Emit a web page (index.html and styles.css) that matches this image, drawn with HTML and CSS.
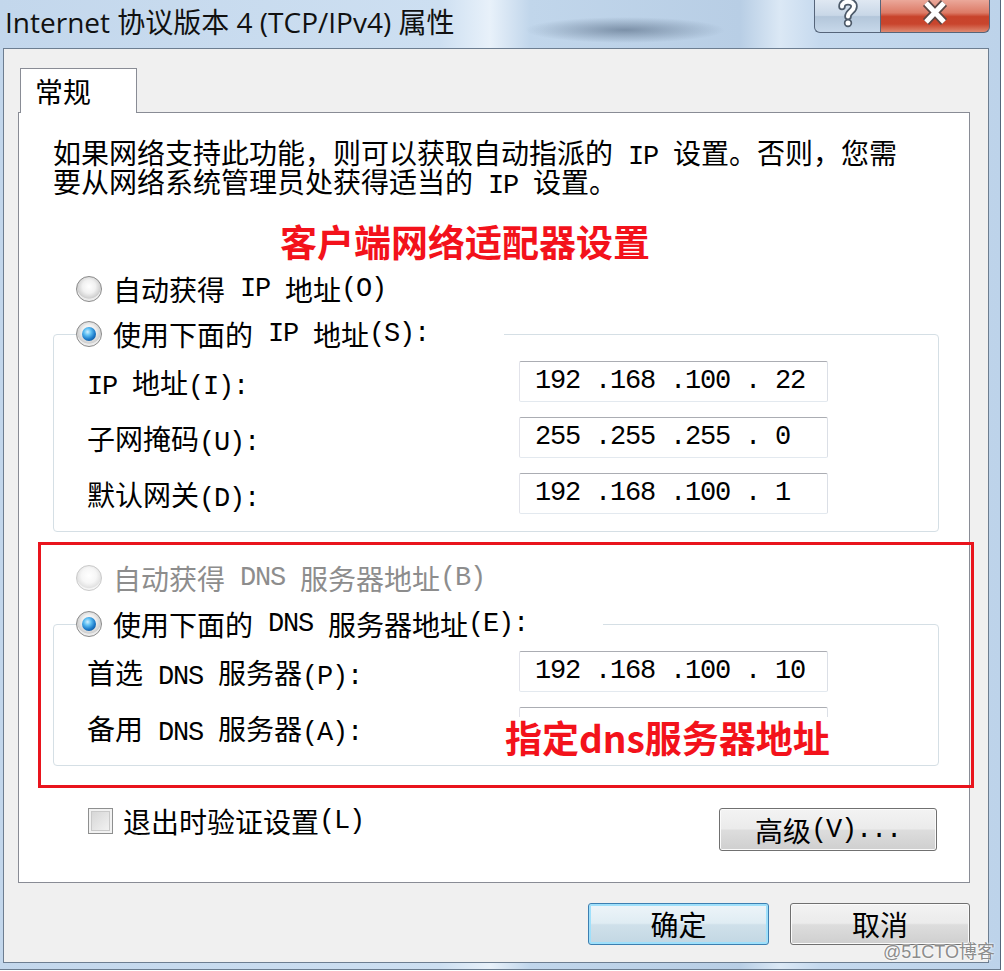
FILE: index.html
```html
<!DOCTYPE html>
<html lang="zh-CN">
<head>
    <meta charset="UTF-8" />
    <title>Internet 协议版本 4 (TCP/IPv4) 属性</title>
    <link rel="stylesheet" href="styles.css">
</head>
<body>
    <div class="window">
        <div class="titlebar">
            <div class="title">Internet 协议版本 4 (TCP/IPv4) 属性</div>
            <div class="caption">
                <div class="cap-btn help">
                    <svg width="22" height="30" viewBox="0 0 22 30">
                        <path d="M5 8.5 C5 2 17 2 17 8.5 C17 13 11 13.5 11 18.5" fill="none" stroke="#4d5a69" stroke-width="7.5" stroke-linecap="round"/>
                        <circle cx="11" cy="25" r="4.2" fill="#4d5a69"/>
                        <path d="M5 8.5 C5 2 17 2 17 8.5 C17 13 11 13.5 11 18.5" fill="none" stroke="#fff" stroke-width="4" stroke-linecap="round"/>
                        <circle cx="11" cy="25" r="2.5" fill="#fff"/>
                    </svg>
                </div>
                <div class="cap-btn close">
                    <svg width="30" height="26" viewBox="0 0 30 26">
                        <path d="M6 3 L24 22 M24 3 L6 22" stroke="#5b4644" stroke-width="8.5"/>
                        <path d="M6 3 L24 22 M24 3 L6 22" stroke="#fff" stroke-width="5"/>
                    </svg>
                </div>
            </div>
        </div>

        <div class="client">
            <div class="tabs"><div class="tab">常规</div></div>

            <div class="panel">
                <p class="desc">如果网络支持此功能，则可以获取自动指派的<span class="en"> IP </span>设置。否则，您需<br>要从网络系统管理员处获得适当的<span class="en"> IP </span>设置。</p>

                <div class="note">客户端网络适配器设置</div>

                <div class="choice"><span class="radio"></span>自动获得<span class="en"> IP </span>地址<span class="en">(O)</span></div>

                <fieldset class="group">
                    <legend><span class="choice"><span class="radio on"></span>使用下面的<span class="en"> IP </span>地址<span class="en">(S):</span></span></legend>
                    <div class="field">
                        <label><span class="en">IP </span>地址<span class="en">(I):</span></label>
                        <div class="ip">192 .168 .100 . 22</div>
                    </div>
                    <div class="field">
                        <label>子网掩码<span class="en">(U):</span></label>
                        <div class="ip">255 .255 .255 . 0</div>
                    </div>
                    <div class="field">
                        <label>默认网关<span class="en">(D):</span></label>
                        <div class="ip">192 .168 .100 . 1</div>
                    </div>
                </fieldset>

                <div class="choice off"><span class="radio"></span>自动获得<span class="en"> DNS </span>服务器地址<span class="en">(B)</span></div>

                <fieldset class="group dns">
                    <legend><span class="choice"><span class="radio on"></span>使用下面的<span class="en"> DNS </span>服务器地址<span class="en">(E):</span></span></legend>
                    <div class="field">
                        <label>首选<span class="en"> DNS </span>服务器<span class="en">(P):</span></label>
                        <div class="ip">192 .168 .100 . 10</div>
                    </div>
                    <div class="field">
                        <label>备用<span class="en"> DNS </span>服务器<span class="en">(A):</span></label>
                        <div class="ip"></div>
                    </div>
                </fieldset>

                <div class="options">
                    <div class="choice"><span class="check"></span>退出时验证设置<span class="en">(L)</span></div>
                    <div class="btn advanced">高级<span class="en">(V)...</span></div>
                </div>

                <!-- annotations drawn over the screenshot -->
                <div class="mark"></div>
                <div class="mark-text">指定dns服务器地址</div>
            </div>

            <div class="actions">
                <div class="btn default">确定</div>
                <div class="btn">取消</div>
            </div>
        </div>

        <div class="watermark">@51CTO博客</div>
    </div>
</body>
</html>
```

FILE: styles.css
```css
body {
    margin: 0;
    background: #fff;
    font-family: "Noto Sans CJK SC", sans-serif;
    color: #000;
}
.window {
    position: relative;
    width: 1001px;
    height: 970px;
    box-sizing: border-box;
    padding: 0 11px 6px 3px;
    border-right: 1px solid #55667a;
    border-bottom: 1px solid #6b7c8f;
    display: flex;
    flex-direction: column;
    background:
        radial-gradient(ellipse 100px 13px at 625px 30px, rgba(60, 80, 105, 0.5), rgba(60, 80, 105, 0)),
        linear-gradient(90deg, #c3d7ec 0, #cddff1 44%, #e8f1fa 49%, #c1d6eb 53%, #b8cee5 74%, #dbe8f5 78%, #c5d9ee 82%, #bdd3ea 100%);
}
.titlebar {
    height: 48px;
    display: flex;
    align-items: flex-start;
}
.title {
    font-family: "Open Sans", "Noto Sans CJK SC", sans-serif;
    font-size: 28px;
    line-height: 44px;
    padding-left: 2px;
    color: #111;
    white-space: nowrap;
}
.caption {
    margin-left: auto;
    margin-right: -1px;
    display: flex;
}
.cap-btn {
    height: 33px;
    box-sizing: border-box;
    border: 1px solid #56657a;
    border-top: none;
    display: flex;
    justify-content: center;
    align-items: flex-start;
    overflow: hidden;
}
.help {
    width: 66px;
    border-right: none;
    border-radius: 0 0 0 6px;
    background: linear-gradient(#dfe8f2, #c8d7e7 48%, #b3c6da 52%, #c7d8ea);
}
.help svg {
    margin-top: -2px;
}
.close {
    width: 110px;
    border-radius: 0 0 6px 0;
    background: linear-gradient(#eba89a, #dc7a66 40%, #c8432b 52%, #c9452d 75%, #de8a72);
}

.client {
    flex: 1;
    background: #f0f0f0;
    border: 1px solid #6d7e91;
    padding: 19px 18px 0 14px;
    position: relative;
}
.tabs {
    height: 44px;
}
.tab {
    position: relative;
    z-index: 1;
    width: 117px;
    height: 45px;
    box-sizing: border-box;
    margin-left: 2px;
    padding-left: 14px;
    background: #fff;
    border: 1px solid #898c95;
    border-bottom: none;
    font-size: 28px;
    line-height: 44px;
}
.panel {
    position: relative;
    height: 771px;
    box-sizing: border-box;
    background: #fff;
    border: 1px solid #898c95;
    font-size: 28px;
}
.en {
    font-family: "Liberation Mono", monospace;
    font-size: 27px;
    letter-spacing: -1.2px;
    line-height: 0;
    white-space: pre;
}
.desc {
    margin: 25px 0 0 34px;
    line-height: 29px;
    white-space: nowrap;
}
.note {
    margin: 23px 0 0 261px;
    font-size: 37px;
    font-weight: bold;
    line-height: 44px;
    color: #f3121b;
}
.choice {
    display: flex;
    align-items: center;
    height: 30px;
    line-height: 30px;
    white-space: nowrap;
}
.panel > .choice {
    margin: 11px 0 0 57px;
}
.choice.off {
    color: #8d8d8d;
    margin-top: 31px;
}
.radio {
    position: relative;
    width: 26px;
    height: 26px;
    box-sizing: border-box;
    margin-right: 11px;
    border-radius: 50%;
    border: 1px solid #8a8a8a;
    background: radial-gradient(circle at 50% 40%, #fff 0, #f1f1f1 35%, #cfcfcf 62%, #eaeaea 66%, #f7f7f7 100%);
    flex: none;
}
.radio.on::after {
    content: "";
    position: absolute;
    left: 5px;
    top: 5px;
    width: 14px;
    height: 14px;
    border-radius: 50%;
    background: radial-gradient(circle at 40% 35%, #d2f0ff 0, #5fc0f3 28%, #1c79c8 60%, #0b3d72 100%);
}
.off .radio {
    border-color: #c9c9c9;
    background: radial-gradient(circle at 50% 40%, #fff 0, #f6f6f6 40%, #e2e2e2 64%, #f4f4f4 70%, #fbfbfb 100%);
}
.check {
    width: 25px;
    height: 26px;
    box-sizing: border-box;
    margin-right: 10px;
    border: 1px solid #8e8f8f;
    background: linear-gradient(135deg, #d2d2d2, #f6f6f6);
    box-shadow: inset 0 0 0 2px #f2f2f2, inset 0 0 0 3px #c9c9c9;
    flex: none;
}

.group {
    margin: 15px 30px 0 34px;
    padding: 0 0 17px;
    min-width: 0;
    border: 1px solid #d5dfe5;
    border-radius: 4px;
}
.group.dns {
    margin-top: 16px;
}
.group legend {
    margin-left: 22px;
    padding: 0 75px 0 0;
    line-height: 30px;
}
.field {
    display: flex;
    align-items: center;
    margin: 12px 0 0 33px;
    line-height: 30px;
}
.field + .field {
    margin-top: 15px;
}
.field label {
    width: 432px;
    white-space: nowrap;
}
.ip {
    width: 309px;
    height: 41px;
    box-sizing: border-box;
    padding-left: 15px;
    border: 1px solid #abadb3;
    border-color: #abadb3 #dbdfe6 #e3e9ef #e2e3ea;
    border-radius: 2px;
    background: #fff;
    font-family: "Liberation Mono", monospace;
    font-size: 27px;
    letter-spacing: -1.2px;
    line-height: 39px;
    white-space: pre;
}

.options {
    display: flex;
    justify-content: space-between;
    align-items: flex-start;
    margin: 40px 32px 0 69px;
}
.btn {
    box-sizing: border-box;
    display: flex;
    justify-content: center;
    align-items: center;
    border: 1px solid #707070;
    border-radius: 3px;
    background: linear-gradient(#f3f3f3, #ebebeb 48%, #dddddd 52%, #cfcfcf);
    box-shadow: inset 0 0 0 1px #fbfbfb;
    font-size: 28px;
    line-height: 30px;
    white-space: nowrap;
}
.advanced {
    width: 218px;
    height: 43px;
    margin-top: 2px;
}
.actions {
    display: flex;
    justify-content: flex-end;
    gap: 21px;
    margin-top: 20px;
}
.actions .btn {
    width: 180px;
    height: 42px;
}
.actions .default {
    width: 181px;
    border-color: #3c7fb1;
    background: linear-gradient(#eef5f9, #dfecf3 48%, #cfe0ea 52%, #c2d7e3);
    box-shadow: inset 0 0 0 2px #9fe0fb;
}

.mark {
    position: absolute;
    left: 19px;
    top: 429px;
    width: 930px;
    height: 240px;
    border: 3px solid #e9141d;
}
.mark-text {
    position: absolute;
    left: 486px;
    top: 604px;
    padding-right: 2px;
    background: #fff;
    color: #f3121b;
    font-size: 37px;
    font-weight: bold;
    line-height: 40px;
    white-space: nowrap;
}
.watermark {
    position: absolute;
    right: 5px;
    bottom: 6px;
    font-family: "Liberation Sans", "Noto Sans CJK SC", sans-serif;
    font-size: 18px;
    color: #8c8c8c;
    text-shadow: 0 0 2px #fff, 0 0 2px #fff;
}
```
